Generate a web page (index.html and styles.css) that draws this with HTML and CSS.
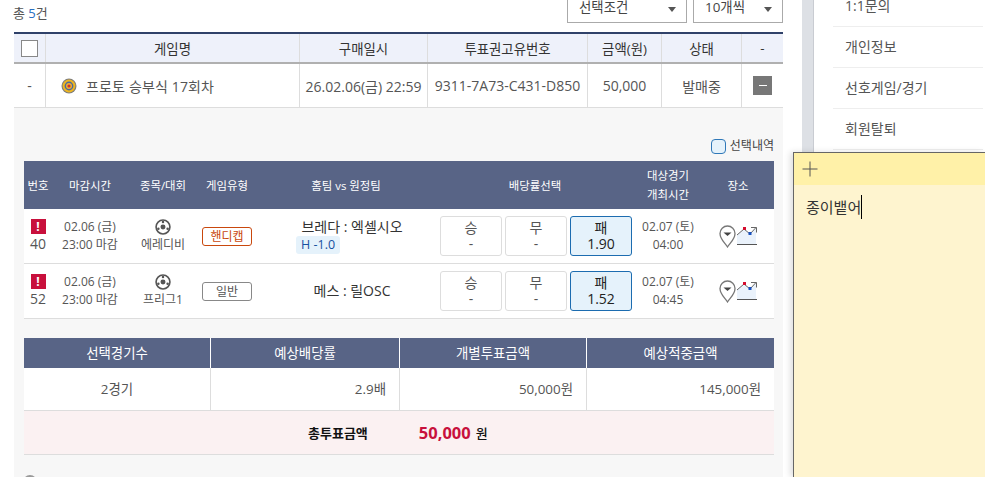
FILE: index.html
```html
<!DOCTYPE html>
<html lang="ko">
<head>
    <meta charset="UTF-8">
    <meta name="viewport" content="width=device-width, initial-scale=1.0">
    <title>구매내역</title>
    <link rel="stylesheet" href="styles.css">
</head>
<body>
    <div class="page">
        <main class="content">
            <div class="toolbar">
                <div class="total">총 <span class="total-num">5</span>건</div>
                <div class="select select-cond">선택조건<i class="caret"></i></div>
                <div class="select select-size">10개씩<i class="caret"></i></div>
            </div>

            <!-- 구매 목록 -->
            <div class="list-head">
                <div class="col-check"><span class="checkbox"></span></div>
                <div class="col-name">게임명</div>
                <div class="col-date">구매일시</div>
                <div class="col-code">투표권고유번호</div>
                <div class="col-price">금액(원)</div>
                <div class="col-state">상태</div>
                <div class="col-toggle">-</div>
            </div>
            <div class="list-row">
                <div class="col-check">-</div>
                <div class="col-name name-cell">
                    <svg class="target" width="16" height="16" viewBox="0 0 16 16">
                        <circle cx="8" cy="8" r="7.5" fill="#7d7d7d"/>
                        <circle cx="8" cy="8" r="6.4" fill="#eeb620"/>
                        <circle cx="8" cy="8" r="4.4" fill="#4a6a9c"/>
                        <circle cx="8" cy="8" r="3" fill="#f0b030"/>
                        <circle cx="8" cy="8" r="1.6" fill="#d0302c"/>
                    </svg>
                    프로토 승부식 17회차
                </div>
                <div class="col-date">26.02.06(금) 22:59</div>
                <div class="col-code">9311-7A73-C431-D850</div>
                <div class="col-price">50,000</div>
                <div class="col-state">발매중</div>
                <div class="col-toggle"><span class="minus"></span></div>
            </div>

            <section class="detail">
                <div class="detail-top">
                    <span class="round-check"></span>선택내역
                </div>

                <!-- 경기 목록 -->
                <div class="game-head">
                    <div class="g-no">번호</div>
                    <div class="g-close">마감시간</div>
                    <div class="g-league">종목/대회</div>
                    <div class="g-type">게임유형</div>
                    <div class="g-team">홈팀 vs 원정팀</div>
                    <div class="g-odds">배당률선택</div>
                    <div class="g-time">대상경기<br>개최시간</div>
                    <div class="g-place">장소</div>
                </div>

                <div class="game-row">
                    <div class="g-no"><span class="alert">!</span><span>40</span></div>
                    <div class="g-close">02.06 (금)<br>23:00 마감</div>
                    <div class="g-league">
                        <svg class="ball" width="16" height="16" viewBox="0 0 18 18">
                            <circle cx="9" cy="9" r="7.8" fill="#fff" stroke="#555" stroke-width="1.8"/>
                            <circle cx="9" cy="9" r="2.8" fill="#555"/>
                            <circle cx="9" cy="3.4" r="1.4" fill="#555"/>
                            <circle cx="3.8" cy="11" r="1.4" fill="#555"/>
                            <circle cx="14.2" cy="11" r="1.4" fill="#555"/>
                        </svg>
                        <span>에레디비</span>
                    </div>
                    <div class="g-type"><span class="tag tag-handi">핸디캡</span></div>
                    <div class="g-team team-cell">
                        <span class="team-name">브레다 : 엑셀시오</span>
                        <span class="handi">H -1.0</span>
                    </div>
                    <div class="g-odds odds-cell">
                        <div class="odd">승<span>-</span></div>
                        <div class="odd">무<span>-</span></div>
                        <div class="odd odd-on">패<span>1.90</span></div>
                    </div>
                    <div class="g-time time-cell">02.07 (토)<br>04:00</div>
                    <div class="g-place">
                        <svg class="pin" width="17" height="23" viewBox="0 0 17 23">
                            <path d="M8.500 22C5.500 17.500 1 14 1 8.500a7.500 7.500 0 0 1 15 0c0 5.500-4.500 9-7.500 13.500z" fill="#fff" stroke="#777" stroke-width="1.300"/>
                            <path d="M4.500 7.500h8l-4 3.500z" fill="#444"/>
                        </svg>
                        <svg class="chart" width="20" height="20" viewBox="0 0 20 20">
                            <path d="M0 9l7-6 6 5 6-6v16H0z" fill="#eaf2fb"/>
                            <path d="M0 9l7-6 6 5 6-6.500" fill="none" stroke="#666"/>
                            <path d="M14 1.500h5.500v5" fill="none" stroke="#666"/>
                            <path d="M0 18.500h20" stroke="#555"/>
                            <rect x="6" y="1" width="3" height="3" fill="#d40d2e"/>
                            <rect x="11.500" y="6" width="3" height="3" fill="#1750c0"/>
                        </svg>
                    </div>
                </div>

                <div class="game-row">
                    <div class="g-no"><span class="alert">!</span><span>52</span></div>
                    <div class="g-close">02.06 (금)<br>23:00 마감</div>
                    <div class="g-league">
                        <svg class="ball" width="16" height="16" viewBox="0 0 18 18">
                            <circle cx="9" cy="9" r="7.8" fill="#fff" stroke="#555" stroke-width="1.8"/>
                            <circle cx="9" cy="9" r="2.8" fill="#555"/>
                            <circle cx="9" cy="3.4" r="1.4" fill="#555"/>
                            <circle cx="3.8" cy="11" r="1.4" fill="#555"/>
                            <circle cx="14.2" cy="11" r="1.4" fill="#555"/>
                        </svg>
                        <span>프리그1</span>
                    </div>
                    <div class="g-type"><span class="tag">일반</span></div>
                    <div class="g-team team-cell">
                        <span class="team-name">메스 : 릴OSC</span>
                    </div>
                    <div class="g-odds odds-cell">
                        <div class="odd">승<span>-</span></div>
                        <div class="odd">무<span>-</span></div>
                        <div class="odd odd-on">패<span>1.52</span></div>
                    </div>
                    <div class="g-time time-cell">02.07 (토)<br>04:45</div>
                    <div class="g-place">
                        <svg class="pin" width="17" height="23" viewBox="0 0 17 23">
                            <path d="M8.500 22C5.500 17.500 1 14 1 8.500a7.500 7.500 0 0 1 15 0c0 5.500-4.500 9-7.500 13.500z" fill="#fff" stroke="#777" stroke-width="1.300"/>
                            <path d="M4.500 7.500h8l-4 3.500z" fill="#444"/>
                        </svg>
                        <svg class="chart" width="20" height="20" viewBox="0 0 20 20">
                            <path d="M0 9l7-6 6 5 6-6v16H0z" fill="#eaf2fb"/>
                            <path d="M0 9l7-6 6 5 6-6.500" fill="none" stroke="#666"/>
                            <path d="M14 1.500h5.500v5" fill="none" stroke="#666"/>
                            <path d="M0 18.500h20" stroke="#555"/>
                            <rect x="6" y="1" width="3" height="3" fill="#d40d2e"/>
                            <rect x="11.500" y="6" width="3" height="3" fill="#1750c0"/>
                        </svg>
                    </div>
                </div>

                <!-- 합계 -->
                <div class="sum-head">
                    <div>선택경기수</div>
                    <div>예상배당률</div>
                    <div>개별투표금액</div>
                    <div>예상적중금액</div>
                </div>
                <div class="sum-row">
                    <div class="sum-center">2경기</div>
                    <div>2.9배</div>
                    <div>50,000원</div>
                    <div>145,000원</div>
                </div>
                <div class="sum-total">
                    <strong class="sum-label">총투표금액</strong>
                    <strong class="sum-money">50,000</strong>
                    <strong class="sum-unit">원</strong>
                </div>
                <span class="info-dot"></span>
            </section>
        </main>

        <div class="gutter"></div>

        <nav class="side">
            <a>1:1문의</a>
            <a>개인정보</a>
            <a>선호게임/경기</a>
            <a>회원탈퇴</a>
        </nav>
    </div>

    <!-- 스티커 메모 창 -->
    <aside class="note">
        <div class="note-bar">
            <svg width="16" height="16" viewBox="0 0 16 16"><path d="M8 .5v15M.5 8h15" stroke="#555" fill="none"/></svg>
        </div>
        <div class="note-body">종이뱉어<span class="cursor"></span></div>
    </aside>
</body>
</html>
```

FILE: styles.css
```css
* {
    box-sizing: border-box;
}
html, body {
    margin: 0;
    height: 477px;
    overflow: hidden;
    background: #fff;
}
body {
    font-family: "Open Sans", "Noto Sans CJK KR", sans-serif;
    font-size: 13.4px;
    color: #555;
}
.page {
    display: flex;
    height: 477px;
    overflow: hidden;
}
.content {
    width: 769px;
    margin-left: 14px;
    flex: none;
}

/* 상단 */
.toolbar {
    display: flex;
    height: 32px;
}
.total {
    margin-left: -1px;
    margin-right: auto;
    padding-top: 3px;
    line-height: 20px;
    font-size: 13px;
}
.total-num {
    color: #2a6fc0;
}
.select {
    height: 23px;
    border: 1px solid #aaa;
    border-top: 0;
    padding-left: 11px;
    position: relative;
    line-height: 15px;
    color: #444;
}
.select-cond {
    width: 120px;
    margin-right: 6px;
}
.select-size {
    width: 90px;
}
.caret {
    position: absolute;
    right: 10px;
    top: 7px;
    width: 0;
    height: 0;
    border: 4px solid transparent;
    border-top: 5px solid #555;
    border-bottom: 0;
}

/* 목록 */
.list-head, .list-row {
    display: grid;
    grid-template-columns: 32px 254px 128px 160px 74px 80px 41px;
    width: 769px;
}
.list-head {
    height: 32px;
    background: #eef1fa;
    border-top: 2px solid #2f4169;
    border-bottom: 2px solid #b0b0b0;
    color: #333;
}
.list-row {
    height: 44px;
    border-bottom: 1px solid #ddd;
    font-size: 14px;
}
.list-head > div, .list-row > div {
    display: flex;
    align-items: center;
    justify-content: center;
    border-right: 1px solid #ddd;
}
.list-head > div:last-child, .list-row > div:last-child {
    border-right: 0;
}
.checkbox {
    width: 17px;
    height: 17px;
    border: 1px solid #888;
    background: #fff;
}
.list-row .name-cell {
    justify-content: flex-start;
    padding-left: 15px;
    letter-spacing: .15px;
}
.target {
    margin-right: 9px;
    margin-top: 1px;
}
.minus {
    width: 19px;
    height: 19px;
    background: #777;
    display: flex;
    align-items: center;
    justify-content: center;
}
.minus::before {
    content: "";
    width: 8px;
    height: 1px;
    background: #fff;
}

/* 상세 */
.detail {
    width: 769px;
    height: 369px;
    background: #f7f7f7;
    padding: 0 9px 0 10px;
    position: relative;
}
.detail-top {
    height: 53px;
    padding-top: 23px;
    display: flex;
    align-items: center;
    justify-content: flex-end;
    font-size: 12px;
    color: #444;
    line-height: 18px;
}
.round-check {
    width: 15px;
    height: 15px;
    border: 1px solid #2f78b8;
    border-radius: 4px;
    background: #e5f2fb;
    margin-right: 4px;
}
.game-head, .game-row {
    display: grid;
    grid-template-columns: 28px 76px 70px 58px 180px 198px 68px 72px;
}
.game-head {
    height: 48px;
    background: #586486;
    color: #fff;
    font-size: 11.4px;
    line-height: 19px;
    text-align: center;
    align-items: center;
}
.game-row {
    height: 55px;
    background: #fff;
    border-bottom: 1px solid #ddd;
    font-size: 12px;
    align-items: center;
    text-align: center;
    line-height: 18px;
}
.game-row .g-team {
    padding-left: 12px;
}
.game-row .g-no {
    display: flex;
    flex-direction: column;
    align-items: center;
    font-size: 14px;
    line-height: 20px;
}
.alert {
    width: 15px;
    height: 15px;
    background: #c8103c;
    color: #fff;
    font-size: 12px;
    font-weight: 700;
    line-height: 15px;
    text-align: center;
}
.game-row .g-league {
    display: flex;
    flex-direction: column;
    align-items: center;
    line-height: 17px;
}
.ball {
    margin-bottom: 1px;
}
.tag {
    display: inline-block;
    width: 50px;
    height: 19px;
    border: 1px solid #888;
    border-radius: 3px;
    line-height: 17px;
    font-size: 12px;
    background: #fff;
}
.tag-handi {
    border-color: #c9480d;
    color: #c9480d;
}
.team-cell {
    display: flex;
    flex-direction: column;
    align-items: center;
    font-size: 14px;
    color: #333;
}
.handi {
    align-self: flex-start;
    margin-left: 28px;
    margin-top: 0;
    padding: 0 5px;
    height: 18px;
    line-height: 18px;
    font-size: 12.500px;
    background: #e5f2fb;
    border-radius: 3px;
    color: #1750a0;
}
.odds-cell {
    display: flex;
    gap: 3px;
    padding-left: 4px;
}
.odd {
    width: 62px;
    height: 40px;
    border: 1px solid #ddd;
    border-radius: 3px;
    background: #fff;
    display: flex;
    flex-direction: column;
    align-items: center;
    justify-content: center;
    font-size: 14px;
    line-height: 16px;
}
.odd-on {
    background: #e5f2fb;
    border-color: #1c6cb0;
    color: #222;
}
.g-place {
    display: flex;
    align-items: center;
    justify-content: center;
}
.game-head .g-place {
    display: block;
}
.pin, .chart {
    flex: none;
}
.chart {
    margin-left: 1px;
}

/* 합계 */
.sum-head, .sum-row {
    display: grid;
    grid-template-columns: 186px 189px 187px 188px;
    text-align: center;
}
.sum-head {
    margin-top: 19px;
    height: 30px;
    background: #586486;
    color: #fff;
    line-height: 30px;
}
.sum-head > div + div {
    border-left: 1px solid #fff;
}
.sum-row {
    height: 43px;
    background: #fff;
    border-bottom: 1px solid #ddd;
    line-height: 42px;
}
.sum-row > div {
    text-align: right;
    padding-right: 13px;
}
.sum-row > div + div {
    border-left: 1px solid #ddd;
}
.sum-row .sum-center {
    text-align: center;
    padding-right: 0;
}
.sum-total {
    height: 44px;
    background: #fbf1f2;
    border-bottom: 1px solid #ddd;
    display: flex;
    align-items: center;
    color: #111;
}
.sum-label {
    margin-left: 284px;
    font-size: 13px;
}
.sum-money {
    margin-left: 51px;
    font-size: 16.500px;
    color: #c8103c;
}
.sum-unit {
    margin-left: 5px;
    font-size: 13px;
    font-weight: 500;
}
.info-dot {
    position: absolute;
    left: 9px;
    top: 367px;
    width: 14px;
    height: 14px;
    border-radius: 50%;
    background: #999;
}

/* 오른쪽 */
.gutter {
    width: 12px;
    margin-left: 19px;
    flex: none;
    background: #dde0e5;
    border-right: 1px solid #c9ccd2;
}
.side {
    margin-left: 19px;
    width: 150px;
    flex: none;
    margin-top: -14px;
    display: flex;
    flex-direction: column;
}
.side a {
    height: 41px;
    line-height: 40px;
    padding-left: 12px;
    border-bottom: 1px solid #eee;
    color: #555;
    font-size: 14px;
}
.note {
    position: absolute;
    left: 793px;
    top: 152px;
    width: 192px;
    height: 325px;
    border: 1px solid #666;
    border-right: 0;
    border-bottom: 0;
    background: #fef4cf;
    box-shadow: -3px 0 6px rgba(0, 0, 0, .12);
}
.note-bar {
    height: 32px;
    background: #fff1a8;
    padding: 8px 0 0 8px;
}
.note-bar svg {
    display: block;
}
.note-body {
    padding: 10px 0 0 12px;
    font-size: 15px;
    line-height: 24px;
    color: #333;
    display: flex;
    align-items: center;
}
.cursor {
    display: inline-block;
    width: 1px;
    height: 24px;
    background: #000;
}
```
